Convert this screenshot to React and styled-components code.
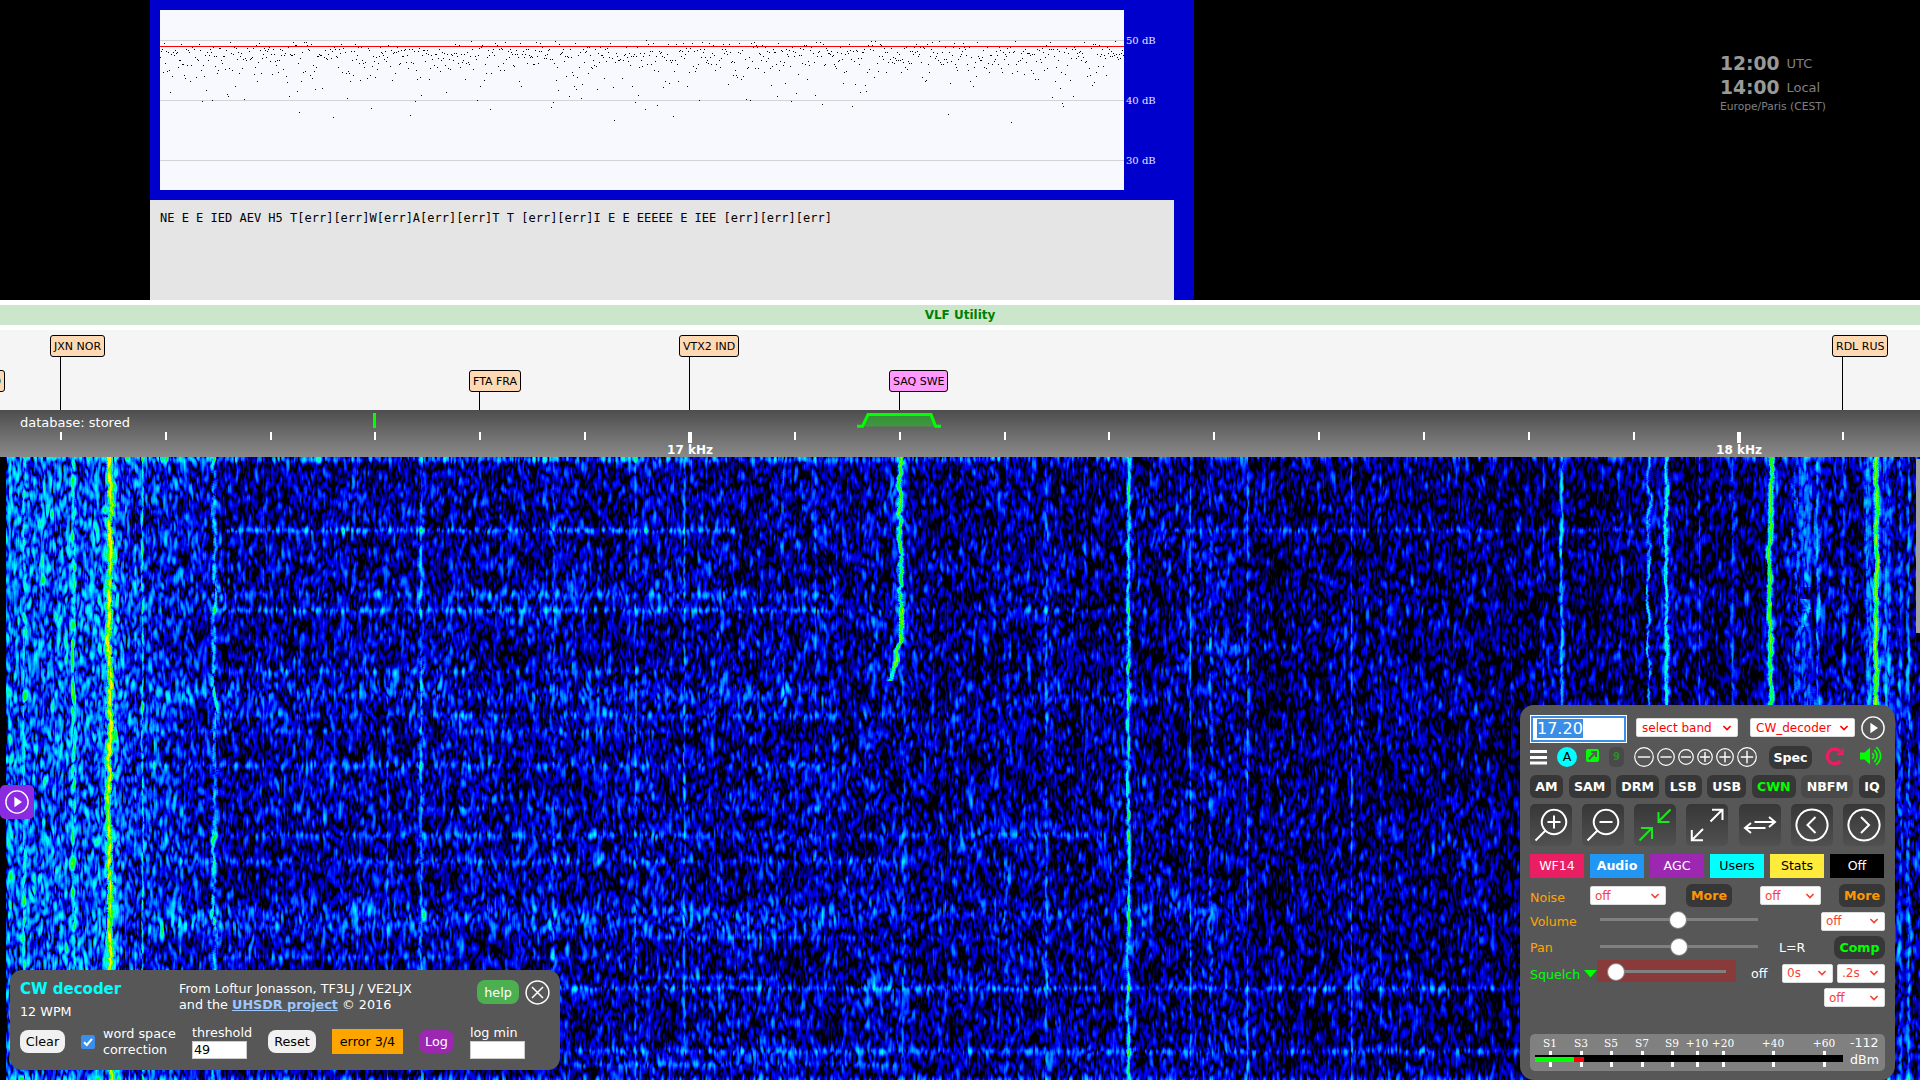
import React, { useEffect, useRef } from "react";
import styled, { createGlobalStyle } from "styled-components";

const WF_W = 1920;
const WF_H = 623;

const stations = [
  { name: "JXN NOR", x: 50 },
  { name: "FTA FRA", x: 469, low: true },
  { name: "VTX2 IND", x: 679 },
  { name: "SAQ SWE", x: 889, low: true, active: true },
  { name: "RDL RUS", x: 1832 },
];

const ticks = Array.from({ length: 18 }, (_, i) => ({
  x: Math.round(60.9 + i * 104.855),
  label: i === 6 ? "17 kHz" : i === 16 ? "18 kHz" : "",
}));

// x, strength, width, drift, first row, last row
const carriers = [
  [9, 14, 1, 0, 0, 623],
  [24, 24, 1.8, 1, 0, 623],
  [73, 24, 1.8, 1, 0, 623],
  [109, 64, 3, 2, 0, 623],
  [142, 34, 1, 0.7, 0, 623],
  [214, 36, 2.2, 2, 0, 623],
  [387, 24, 1.1, 0.5, 230, 623],
  [421, 29, 2.2, 1.5, 0, 623],
  [553, 18, 2, 1.5, 0, 623],
  [635, 25, 1.2, 0.5, 0, 623],
  [684, 24, 1.4, 0.5, 0, 623],
  [748, 18, 1.5, 1, 380, 510],
  [783, 18, 2, 1.5, 0, 250],
  [815, 20, 1.1, 0.3, 0, 400],
  [900, 68, 2.8, 2, 0, 224],
  [903, 18, 1.8, 1, 224, 623],
  [933, 14, 1, 0.4, 0, 623],
  [1007, 14, 2, 2, 0, 623],
  [1046, 24, 1.6, 0.7, 0, 623],
  [1128, 52, 2.1, 1, 0, 623],
  [1190, 28, 1.1, 0.4, 0, 623],
  [1210, 19, 1.6, 1.5, 0, 623],
  [1247, 30, 1.2, 0.6, 0, 623],
  [1351, 28, 1.2, 0.5, 0, 623],
  [1380, 19, 1.4, 0.5, 0, 623],
  [1543, 20, 1.3, 0.5, 0, 623],
  [1561, 51, 2.1, 0.7, 0, 623],
  [1620, 22, 1.7, 1.5, 0, 623],
  [1648, 48, 1.8, 1.8, 0, 623],
  [1666, 62, 2.4, 1.3, 0, 623],
  [1699, 28, 1.1, 0.5, 0, 623],
  [1732, 26, 2.4, 1.5, 0, 623],
  [1770, 79, 3.1, 1.4, 0, 623],
  [1795, 22, 2, 3, 0, 623],
  [1805, 30, 6, 2, 0, 130],
  [1804, 44, 4, 3, 142, 170],
  [1817, 30, 2, 1.5, 0, 623],
  [1805, 26, 8, 4, 170, 623],
  [1843, 20, 1.6, 1, 0, 623],
  [1869, 34, 4, 2, 0, 623],
  [1876, 82, 2.8, 1.3, 0, 623],
  [1886, 30, 5, 2, 0, 623],
  [1900, 24, 2, 1, 0, 623],
  [1908, 28, 2, 1, 0, 623],
];
const SAQ = carriers.findIndex((c) => c[0] === 900);

// row, strength, thickness, from, to
const bursts = [
  [3, 15, 3, 150, 1000],
  [73, 27, 3.5, 225, 735],
  [73, 14, 3, 1150, 1640],
  [137, 16, 5, 210, 840],
  [153, 22, 3.5, 200, 830],
  [153, 9, 3, 830, 1150],
  [189, 6, 3, 1200, 1780],
  [214, 14, 4, 220, 680],
  [236, 14, 10, 150, 840],
  [242, 12, 6, 1030, 1170],
  [258, 14, 4, 220, 900],
  [274, 11, 3, 150, 700],
  [308, 14, 4, 150, 860],
  [351, 8, 3, 400, 900],
  [378, 16, 4, 200, 1130],
  [404, 16, 4, 180, 910],
  [455, 12, 10, 150, 1240],
  [470, 12, 9, 150, 850],
  [480, 12, 3, 640, 1000],
  [500, 11, 3, 220, 640],
  [520, 15, 3, 640, 780],
  [531, 22, 3.5, 150, 1530],
  [594, 20, 4, 560, 1520],
  [607, 18, 3.5, 560, 900],
];

function makeRandom(seed) {
  let s = seed;
  return () => {
    s = (s + 0x6d2b79f5) | 0;
    let t = Math.imul(s ^ (s >>> 15), 1 | s);
    t = (t + Math.imul(t ^ (t >>> 7), 61 | t)) ^ t;
    return ((t ^ (t >>> 14)) >>> 0) / 4294967296;
  };
}

function blur(src, dx, dy, r) {
  const out = new Float32Array(src.length);
  for (let y = 0; y < WF_H; y++) {
    for (let x = 0; x < WF_W; x++) {
      let sum = 0;
      for (let k = -r; k <= r; k++) {
        const xx = Math.min(WF_W - 1, Math.max(0, x + k * dx));
        const yy = Math.min(WF_H - 1, Math.max(0, y + k * dy));
        sum += src[yy * WF_W + xx];
      }
      out[y * WF_W + x] = sum;
    }
  }
  return out;
}

function noiseField(rand) {
  let f = new Float32Array(WF_W * WF_H);
  for (let i = 0; i < f.length; i++) f[i] = rand() + rand() + rand() - 1.5;
  f = blur(f, 1, 0, 1);
  f = blur(f, 1, 0, 1);
  f = blur(f, 0, 1, 3);
  f = blur(f, 0, 1, 4);
  return f;
}

function wfColor(i) {
  if (i < 0) return [0, 0, 0];
  if (i < 32) return [0, 0, (i * 255) / 32];
  if (i < 72) return [0, ((i - 32) * 255) / 40, 255];
  if (i < 86) return [0, 255, 255 - ((i - 72) * 255) / 14];
  if (i < 112) return [((i - 86) * 255) / 26, 255, 0];
  return [255, Math.max(0, 255 - (i - 112) * 4), 0];
}

function floorLevel(x) {
  if (x < 6) return -90;
  if (x < 100) return 49;
  if (x < 230) return 49 - (x - 100) * 0.19;
  if (x < 900) return 24.5 - (x - 230) * 0.002;
  if (x < 1250) return 22;
  if (x < 1500) return 19;
  if (x < 1780) return 16;
  return 22;
}

function drawWaterfall(canvas) {
  const ctx = canvas.getContext("2d");
  const rand = makeRandom(1720);
  const re = noiseField(rand);
  const im = noiseField(rand);
  let mean = 0;
  for (let i = 0; i < re.length; i++) mean += re[i] * re[i] + im[i] * im[i];
  mean /= re.length;

  const columns = Array.from({ length: WF_W }, () => (rand() - 0.5) * 8);
  const level = new Float32Array(WF_W * WF_H);
  for (let y = 0; y < WF_H; y++) {
    for (let x = 0; x < WF_W; x++) {
      const swell = 3 * Math.sin(x / 37 + y / 61) * Math.sin(y / 29 - x / 83);
      level[y * WF_W + x] = floorLevel(x) + columns[x] + swell;
    }
  }
  bursts.forEach(([row, amp, thick, from, to]) => {
    const first = Math.max(0, Math.floor(row - thick * 2));
    for (let y = first; y < Math.min(WF_H, row + thick * 2); y++) {
      const a = amp * Math.exp(-((y - row) ** 2) / (thick * thick));
      for (let x = from; x < to; x++) level[y * WF_W + x] += a;
    }
  });
  // carriers do not flicker as much as the noise under them
  const steady = new Float32Array(WF_W * WF_H);
  carriers.forEach(([cx, amp, width, drift, from, to], n) => {
    let jitter = 0;
    for (let y = from; y < to; y++) {
      jitter = jitter * 0.85 + (rand() - 0.5) * drift * 0.7;
      let c = cx + jitter + drift * (Math.sin(y / 9 + n) * 0.4 + Math.sin(y / 31 + n * 2) * 0.4);
      if (n === SAQ && y > 170) c -= ((y - 170) / 54) ** 1.5 * 11;
      for (let x = Math.floor(c - 12); x < c + 13; x++) {
        if (x < 0 || x >= WF_W) continue;
        const d = (x - c) ** 2;
        const halo = amp > 55 ? 18 * Math.exp(-d / 50) : 0;
        const a = Math.max(amp * Math.exp(-d / (width * width)), halo);
        steady[y * WF_W + x] = Math.max(steady[y * WF_W + x], a);
      }
    }
  });

  const img = ctx.createImageData(WF_W, WF_H);
  for (let i = 0; i < level.length; i++) {
    const db = 10 * Math.log10((re[i] * re[i] + im[i] * im[i]) / mean + 0.01);
    const k = 3.7 * Math.exp(-steady[i] / 62);
    const [r, g, b] = wfColor(level[i] + db * k + steady[i]);
    img.data[i * 4] = r;
    img.data[i * 4 + 1] = g;
    img.data[i * 4 + 2] = b;
    img.data[i * 4 + 3] = 255;
  }
  ctx.putImageData(img, 0, 0);
}

function signalDots() {
  const rand = makeRandom(49);
  let d = "";
  for (let x = 0; x < 964; x++) {
    const y = 30 + rand() * 12 - Math.log(1 - rand()) * 13.5;
    d += `M${x} ${Math.min(112, Math.round(y))}h1v1h-1z`;
  }
  return d;
}
const dots = signalDots();

function Select({ width, children, bright }) {
  return (
    <SelectBox $width={width} $bright={bright}>
      {children}
      <svg width="10" height="6" viewBox="0 0 10 6">
        <path d="M1.4 1 L5 4.6 L8.6 1" fill="none" stroke="currentColor" strokeWidth="1.6" />
      </svg>
    </SelectBox>
  );
}

function PlayCircle({ size }) {
  return (
    <svg width={size} height={size} viewBox="0 0 24 24">
      <circle cx="12" cy="12" r="11.1" fill="none" stroke="#fff" strokeWidth="1.4" />
      <path d="M9.4 6.8 L17 12 L9.4 17.2z" fill="#fff" />
    </svg>
  );
}

function RoundSign({ size, plus }) {
  const c = size / 2;
  const arm = size * 0.31;
  return (
    <svg width={size} height={size}>
      <circle cx={c} cy={c} r={c - 0.7} fill="none" stroke="#fff" strokeWidth="1.2" />
      <path
        d={`M${c - arm} ${c}H${c + arm}` + (plus ? `M${c} ${c - arm}V${c + arm}` : "")}
        stroke="#fff"
        strokeWidth="1.4"
      />
    </svg>
  );
}

const toolPaths = {
  zoomIn: "M24 5.8a12.2 12.2 0 1 0 .01 0M15 27L5.5 36.5M24 11.5v13M17.5 18h13",
  zoomOut: "M24 5.8a12.2 12.2 0 1 0 .01 0M15 27L5.5 36.5M17.5 18h13",
  shrink: "M36.5 5.5L25 17M24.5 8v10h11M5.5 36.5L17.5 24.5M7 24h11v11",
  grow: "M24.5 17.5L36 6M26 5.8h10.5V16M5.5 36.5L17 25M5.8 26v10.3H17",
  swap: "M15.5 18H36M30 13l6 5-6 5M26.5 24H6M12 19l-6 5 6 5",
  left: "M21 5.5a15.5 15.5 0 1 0 .01 0M24.5 13l-8 8 8 8",
  right: "M21 5.5a15.5 15.5 0 1 0 .01 0M18 13l8 8-8 8",
};

const modes = [
  ["AM", 33],
  ["SAM", 42],
  ["DRM", 43],
  ["LSB", 37],
  ["USB", 39],
  ["CWN", 44],
  ["NBFM", 52],
  ["IQ", 26],
];

const tabs = [
  ["WF14", "#e91e63", "#fff"],
  ["Audio", "#2196f3", "#fff"],
  ["AGC", "#9c27b0", "#fff"],
  ["Users", "#00ffff", "#000"],
  ["Stats", "#ffeb3b", "#000"],
  ["Off", "#000", "#fff"],
];

const meterMarks = [
  ["S1", 20],
  ["S3", 51],
  ["S5", 81],
  ["S7", 112],
  ["S9", 142],
  ["+10", 167],
  ["+20", 193],
  ["+40", 243],
  ["+60", 294],
];

function Waterfall() {
  const ref = useRef(null);
  useEffect(() => {
    drawWaterfall(ref.current);
  }, []);
  return <WaterfallCanvas ref={ref} width={WF_W} height={WF_H} />;
}

function TopArea() {
  return (
    <Top>
      <Decoder>
        <ChartRow>
          <svg width="964" height="180" shapeRendering="crispEdges">
            <rect width="964" height="180" fill="#f8f9ff" />
            <path d="M0 30.5H964M0 90.5H964M0 150.5H964" stroke="#d3d3d3" />
            <path d={dots} fill="#000" />
            <path d="M0 36.5H964" stroke="#f00" />
          </svg>
          <DbLabels>
            <span>50 dB</span>
            <span>40 dB</span>
            <span>30 dB</span>
          </DbLabels>
        </ChartRow>
        <Output>
          NE E E IED AEV H5 T[err][err]W[err]A[err][err]T T [err][err]I E E EEEEE E IEE
          [err][err][err]
        </Output>
      </Decoder>
      <Clock>
        <div>
          <b>12:00</b> <span>UTC</span>
        </div>
        <div>
          <b>14:00</b> <span>Local</span>
        </div>
        <small>Europe/Paris (CEST)</small>
      </Clock>
    </Top>
  );
}

function FrequencyScale() {
  return (
    <Scale>
      <Database>database: stored</Database>
      <Passband width="90" height="18" viewBox="855 411 90 18">
        <path d="M863 426.5L868 414.5H931L936 426.5z" fill="#00ff00" fillOpacity="0.35" />
        <path
          d="M857 426.3h5.5L868 414.6H931L935.6 426.3H941"
          fill="none"
          stroke="#0f0"
          strokeWidth="3"
        />
      </Passband>
      <CarrierMark />
      {ticks.map((t) => (
        <Tick key={t.x} $big={t.label} style={{ left: t.x }}>
          {t.label && <b>{t.label}</b>}
        </Tick>
      ))}
    </Scale>
  );
}

function DecoderPanel() {
  return (
    <CwPanel>
      <CwHead>
        <CwTitle>
          <b>CW decoder</b>
          <span>12 WPM</span>
        </CwTitle>
        <Credits>
          From Loftur Jonasson, TF3LJ / VE2LJX
          <br />
          and the <a>UHSDR project</a> © 2016
        </Credits>
        <Pill $width={42} $height={24} $bg="#4caf50" $color="#fff">
          help
        </Pill>
        <svg width="25" height="25" viewBox="0 0 25 25">
          <circle cx="12.5" cy="12.5" r="11.4" fill="none" stroke="#fff" strokeWidth="1.5" />
          <path d="M7 7L18 18M18 7L7 18" stroke="#fff" strokeWidth="1.5" />
        </svg>
      </CwHead>
      <CwControls>
        <Pill $width={45}>Clear</Pill>
        <Check>
          <svg width="14" height="14" viewBox="0 0 14 14">
            <rect width="14" height="14" rx="2" fill="#3b8eea" />
            <path d="M3 7.2L5.8 10L11 3.8" fill="none" stroke="#fff" strokeWidth="2" />
          </svg>
          <span>
            word space
            <br />
            correction
          </span>
        </Check>
        <Field>
          threshold
          <div>49</div>
        </Field>
        <Pill $width={48}>Reset</Pill>
        <ErrorBox>error 3/4</ErrorBox>
        <Pill $width={35} $bg="#9c27b0" $color="#fff">
          Log
        </Pill>
        <Field>
          log min
          <div />
        </Field>
      </CwControls>
    </CwPanel>
  );
}

function ControlPanel() {
  return (
    <Control>
      <Row $h={28}>
        <FreqInput>
          <span>17.20</span>
        </FreqInput>
        <Spacer $w={9} />
        <Select width={102} bright>
          select band
        </Select>
        <Spacer $w={12} />
        <Select width={105} bright>
          CW_decoder
        </Select>
        <Spacer />
        <Raised>
          <PlayCircle size={24} />
        </Raised>
      </Row>
      <Row $h={28}>
        <svg width="17" height="15">
          <path d="M0 1.5h17M0 7.5h17M0 13h17" stroke="#fff" strokeWidth="2.8" />
        </svg>
        <Spacer $w={10} />
        <RoundA>A</RoundA>
        <Spacer $w={9} />
        <Raised>
          <svg width="13" height="13" viewBox="0 0 13 13">
            <rect width="13" height="13" rx="2" fill="#0f0" />
            <path d="M2.8 10.2L9 4M5 3h5v5" fill="none" stroke="#575757" strokeWidth="2" />
          </svg>
        </Raised>
        <Spacer $w={10} />
        <Nine>9</Nine>
        <Spacer $w={10} />
        <Signs>
          <RoundSign size={20} />
          <RoundSign size={18} />
          <RoundSign size={16} />
          <RoundSign size={16} plus />
          <RoundSign size={18} plus />
          <RoundSign size={20} plus />
        </Signs>
        <Spacer $w={12} />
        <DarkButton $width={43} $radius={8}>
          Spec
        </DarkButton>
        <Spacer $w={13} />
        <Raised>
          <svg width="19" height="20" viewBox="0 0 19 20">
            <path
              d="M15.4 15.2a7.4 7.4 0 1 1 -0.6 -10.2"
              fill="none"
              stroke="#e91e63"
              strokeWidth="3.4"
            />
            <path d="M18.7 1.4v7.8h-7.8z" fill="#e91e63" />
          </svg>
        </Raised>
        <Spacer $w={16} />
        <Raised>
          <svg width="23" height="20" viewBox="0 0 23 20">
            <path d="M0 6.5h4.5L10 1.5v17L4.5 13.5H0z" fill="#0f0" />
            <path
              d="M12.3 7q2.6 3 0 6M14.3 3.9q5.6 6.1 0 12.2M16.2 1q8.8 9 0 18"
              fill="none"
              stroke="#0f0"
              strokeWidth="1.7"
            />
          </svg>
        </Raised>
      </Row>
      <Row $h={31} $between>
        {modes.map(([name, width]) => (
          <DarkButton
            key={name}
            $width={width}
            $color={name === "CWN" && "#0f0"}
            $bg={name === "NBFM" && "#494949"}
          >
            {name}
          </DarkButton>
        ))}
      </Row>
      <Row $h={46} $between>
        {Object.keys(toolPaths).map((name) => (
          <Tool key={name}>
            <svg width="42" height="42">
              <path
                d={toolPaths[name]}
                fill="none"
                stroke={name === "shrink" ? "#1de61d" : "#fff"}
                strokeWidth="2"
              />
            </svg>
          </Tool>
        ))}
      </Row>
      <Row $h={36} $gap={6}>
        {tabs.map(([name, bg, color]) => (
          <Tab key={name} $bg={bg} $color={color} $active={name === "Audio"}>
            {name}
          </Tab>
        ))}
      </Row>
      <Row $h={23}>
        <Label $drop={4}>Noise</Label>
        <Select width={76}>off</Select>
        <Spacer $w={20} />
        <DarkButton $width={46} $color="#ff9800">
          More
        </DarkButton>
        <Spacer />
        <Select width={61}>off</Select>
        <Spacer $w={18} />
        <DarkButton $width={46} $color="#ff9800">
          More
        </DarkButton>
      </Row>
      <Row $h={28}>
        <Label>Volume</Label>
        <Slider $width={158} $left={10} $pos={78}>
          <i />
        </Slider>
        <Spacer />
        <Select width={64}>off</Select>
      </Row>
      <Row $h={25}>
        <Label>Pan</Label>
        <Slider $width={158} $left={10} $pos={79}>
          <i />
        </Slider>
        <Value $left={21}>L=R</Value>
        <Spacer />
        <DarkButton $width={51} $color="#0f0" $radius={8}>
          Comp
        </DarkButton>
      </Row>
      <Row $h={26}>
        <Label $on $drop={2}>
          Squelch
          <svg width="13" height="8">
            <path d="M0 0h13L6.5 7.5z" fill="#0f0" />
          </svg>
        </Label>
        <SquelchBox>
          <Slider $width={118} $left={11} $pos={8}>
            <i />
          </Slider>
        </SquelchBox>
        <Value $left={15}>off</Value>
        <Spacer />
        <Select width={51}>0s</Select>
        <Spacer $w={4} />
        <Select width={48}>.2s</Select>
      </Row>
      <Row $h={23}>
        <Spacer />
        <Select width={61}>off</Select>
      </Row>
      <Meter>
        <MeterScale>
          <MeterBar>
            <span />
          </MeterBar>
          {meterMarks.map(([name, x]) => (
            <MeterMark key={name} style={{ left: x }}>
              {name}
            </MeterMark>
          ))}
        </MeterScale>
        <MeterValue>
          <span>-112</span>
          <span>dBm</span>
        </MeterValue>
      </Meter>
    </Control>
  );
}

export default function App() {
  return (
    <Page>
      <GlobalStyle />
      <TopArea />
      <Band>VLF Utility</Band>
      <StationArea>
        <Station $low $cut>
          D
        </Station>
        {stations.map((s) => (
          <Station key={s.name} $low={s.low} $active={s.active} style={{ left: s.x }}>
            {s.name}
          </Station>
        ))}
      </StationArea>
      <FrequencyScale />
      <WaterfallArea>
        <Waterfall />
        <ScrollThumb />
        <SideTab>
          <PlayCircle size={24} />
        </SideTab>
        <DecoderPanel />
        <ControlPanel />
      </WaterfallArea>
    </Page>
  );
}

const GlobalStyle = createGlobalStyle`
  * {
    box-sizing: border-box;
  }
  body {
    margin: 0;
    background: #fff;
    overflow: hidden;
  }
  svg {
    display: block;
    flex-shrink: 0;
  }
`;

const Page = styled.div`
  width: 1920px;
  height: 1080px;
  overflow: hidden;
  display: flex;
  flex-direction: column;
  font-family: "DejaVu Sans", Verdana, sans-serif;
  font-size: 12.75px;
  color: #fff;
`;

const Top = styled.div`
  height: 300px;
  background: #000;
  display: flex;
  justify-content: space-between;
  padding: 0 94px 0 150px;
`;
const Decoder = styled.div`
  width: 1044px;
  background: #0000cc;
  padding-top: 10px;
`;
const ChartRow = styled.div`
  display: flex;
  height: 190px;
  padding-left: 10px;
`;
const DbLabels = styled.div`
  display: flex;
  flex-direction: column;
  padding: 1px 0 0 2px;
  font-family: "DejaVu Serif", serif;
  font-size: 10px;
  color: #e8e8ff;
  span {
    height: 60px;
    line-height: 60px;
  }
`;
const Output = styled.div`
  width: 1024px;
  height: 100px;
  background: #e5e5e5;
  padding: 10px;
  color: #000;
  font: 12px/16px "DejaVu Sans Mono", monospace;
`;
const Clock = styled.div`
  width: 106px;
  padding-top: 51px;
  color: #999;
  white-space: nowrap;
  div {
    display: flex;
    align-items: center;
    gap: 7px;
    height: 24px;
  }
  b {
    font-size: 18.7px;
  }
  span {
    font-size: 13px;
    color: #808080;
  }
  small {
    display: block;
    font-size: 10.7px;
    line-height: 16px;
    color: #808080;
  }
`;

const Band = styled.div`
  height: 30px;
  border: solid #fff;
  border-width: 5px 0;
  background: #cce6cc;
  color: green;
  font-size: 12px;
  font-weight: bold;
  line-height: 20px;
  text-align: center;
`;
const StationArea = styled.div`
  position: relative;
  height: 80px;
  background: #f5f5f5;
`;
const Station = styled.div`
  position: absolute;
  top: ${(props) => (props.$low ? 40 : 5)}px;
  ${(props) => props.$cut && "right: 1915px;"}
  height: 22px;
  padding: 0 3px;
  border: 1px solid #000;
  border-radius: 3px;
  background: ${(props) => (props.$active ? "#ff99ff" : "#ffd9b3")};
  color: #000;
  font-size: 11px;
  line-height: 21px;
  white-space: nowrap;
  &::after {
    content: "";
    position: absolute;
    left: 9px;
    top: 21px;
    width: 1px;
    height: ${(props) => (props.$low ? 18 : 53)}px;
    background: #000;
  }
`;

const Scale = styled.div`
  position: relative;
  height: 47px;
  background: linear-gradient(#4d4d4d, #8a8a8a);
`;
const Database = styled.div`
  padding: 4px 0 0 20px;
  line-height: 17px;
  font-size: 13px;
`;
const Passband = styled.svg`
  position: absolute;
  left: 855px;
  top: 1px;
`;
const CarrierMark = styled.div`
  position: absolute;
  left: 373px;
  top: 3px;
  width: 3px;
  height: 15px;
  background: #0f0;
`;
const Tick = styled.div`
  position: absolute;
  top: 22px;
  width: ${(props) => (props.$big ? 4 : 2)}px;
  height: ${(props) => (props.$big ? 11 : 8)}px;
  margin-left: ${(props) => (props.$big ? -2 : -1)}px;
  background: #fff;
  display: flex;
  justify-content: center;
  b {
    font-size: 12px;
    line-height: 14px;
    white-space: nowrap;
    margin-top: 11px;
  }
`;

const WaterfallArea = styled.div`
  position: relative;
  height: 623px;
  background: #000;
`;
const WaterfallCanvas = styled.canvas`
  display: block;
`;
const ScrollThumb = styled.div`
  position: absolute;
  right: 0;
  top: 2px;
  width: 4px;
  height: 174px;
  background: #a0a0a0;
`;
const SideTab = styled.div`
  position: absolute;
  left: 0;
  top: 328px;
  width: 34px;
  height: 34px;
  padding-left: 5px;
  border-radius: 5px;
  background: #8a2be2;
  display: flex;
  align-items: center;
`;

const CwPanel = styled.div`
  position: absolute;
  left: 10px;
  bottom: 10px;
  width: 550px;
  height: 100px;
  padding: 10px;
  border-radius: 12px;
  background: #575757;
`;
const CwHead = styled.div`
  display: flex;
  align-items: flex-start;
  height: 47px;
`;
const CwTitle = styled.div`
  width: 159px;
  b {
    display: block;
    font-size: 15px;
    line-height: 19px;
    color: #00ffff;
  }
  span {
    display: block;
    margin-top: 5px;
    line-height: 16px;
  }
`;
const Credits = styled.div`
  flex: 1;
  line-height: 16px;
  margin-top: 1px;
  a {
    color: #9cc8ff;
    font-weight: bold;
    text-decoration: underline;
  }
  & + div {
    margin-right: 6px;
  }
`;
const Pill = styled.div`
  width: ${(props) => props.$width}px;
  height: ${(props) => props.$height || 23}px;
  border-radius: 8px;
  background: ${(props) => props.$bg || "#f1f1f1"};
  color: ${(props) => props.$color || "#000"};
  display: flex;
  align-items: center;
  justify-content: center;
`;
const CwControls = styled.div`
  display: flex;
  align-items: center;
  gap: 16px;
  height: 29px;
`;
const Check = styled.div`
  display: flex;
  align-items: center;
  gap: 8px;
  width: 95px;
  line-height: 16px;
  white-space: nowrap;
`;
const Field = styled.div`
  width: 60px;
  line-height: 16px;
  white-space: nowrap;
  div {
    width: 55px;
    height: 18px;
    border: 1px solid #ccc;
    background: #fff;
    color: #000;
    padding-left: 1px;
  }
`;
const ErrorBox = styled.div`
  width: 71px;
  height: 25px;
  line-height: 25px;
  background: #ffa500;
  color: #000;
  text-align: center;
`;

const Control = styled.div`
  position: absolute;
  right: 25px;
  bottom: 0;
  width: 375px;
  height: 375px;
  padding: 10px;
  border-radius: 14px;
  background: #575757;
  font-size: 12.6px;
`;
const Row = styled.div`
  display: flex;
  align-items: center;
  height: ${(props) => props.$h}px;
  gap: ${(props) => props.$gap || 0}px;
  justify-content: ${(props) => (props.$between ? "space-between" : "flex-start")};
`;
const Spacer = styled.div`
  ${(props) => (props.$w ? `width: ${props.$w}px;` : "flex: 1;")}
`;
const Raised = styled.div`
  margin-bottom: 3px;
`;
const FreqInput = styled.div`
  width: 97px;
  height: 28px;
  border: 1px solid #fff;
  background: #fff;
  box-shadow: inset 0 0 0 2px #3a8ee6;
  padding: 3px 6px;
  span {
    display: block;
    width: 46px;
    height: 19px;
    background: #3a8ee6;
    font-size: 16px;
    line-height: 19px;
  }
`;
const SelectBox = styled.div`
  width: ${(props) => props.$width}px;
  height: 19px;
  margin-bottom: ${(props) => (props.$bright ? 3 : 0)}px;
  padding: 0 5px 0 ${(props) => (props.$bright ? 5 : 4)}px;
  border: 1px solid #ddd;
  border-radius: 2px;
  background: #fff;
  color: ${(props) => (props.$bright ? "#f00" : "#f44336")};
  font-size: 12px;
  display: flex;
  align-items: center;
  justify-content: space-between;
  white-space: nowrap;
`;
const RoundA = styled.div`
  width: 20px;
  height: 20px;
  border-radius: 50%;
  background: #00ffff;
  color: #000;
  text-align: center;
  line-height: 20px;
`;
const Nine = styled.div`
  width: 15px;
  height: 20px;
  border-radius: 5px;
  background: #494949;
  color: #2e8b2e;
  font-size: 10px;
  font-weight: bold;
  line-height: 20px;
  text-align: center;
`;
const Signs = styled.div`
  display: flex;
  align-items: center;
  gap: 3px;
`;
const DarkButton = styled.div`
  width: ${(props) => props.$width}px;
  height: 23px;
  border-radius: ${(props) => props.$radius || 6}px;
  background: ${(props) => props.$bg || "#373737"};
  color: ${(props) => props.$color || "#fff"};
  font-weight: bold;
  display: flex;
  align-items: center;
  justify-content: center;
`;
const Tool = styled.div`
  width: 42px;
  height: 42px;
  border-radius: 5px;
  background: linear-gradient(#373737, #505050);
`;
const Tab = styled.div`
  width: 54px;
  height: 24px;
  background: ${(props) => props.$bg};
  color: ${(props) => props.$color};
  font-weight: ${(props) => (props.$active ? "bold" : "normal")};
  line-height: 24px;
  text-align: center;
`;
const Label = styled.div`
  width: ${(props) => (props.$on ? 67 : 60)}px;
  padding-top: ${(props) => props.$drop || 0}px;
  color: ${(props) => (props.$on ? "#00ff00" : "#ffa500")};
  display: flex;
  align-items: center;
  justify-content: space-between;
`;
const Slider = styled.div`
  position: relative;
  width: ${(props) => props.$width}px;
  height: 3px;
  margin: 0 0 3px ${(props) => props.$left}px;
  background: #808080;
  i {
    position: absolute;
    left: ${(props) => props.$pos - 9}px;
    top: -7px;
    width: 18px;
    height: 18px;
    border-radius: 50%;
    border: 1px solid #808080;
    background: #fff;
  }
`;
const SquelchBox = styled.div`
  display: flex;
  align-items: center;
  width: 139px;
  height: 22px;
  margin-bottom: 4px;
  padding-top: 3px;
  background: #893b3b;
`;
const Value = styled.div`
  margin-left: ${(props) => props.$left}px;
`;
const Meter = styled.div`
  display: flex;
  width: 355px;
  height: 37px;
  margin-top: 25px;
  border-radius: 5px;
  background: #808080;
`;
const MeterScale = styled.div`
  position: relative;
  width: 320px;
  padding: 21px 0 0 5px;
`;
const MeterBar = styled.div`
  width: 308px;
  height: 7px;
  padding-top: 2px;
  background: #000;
  span {
    display: block;
    width: 49px;
    height: 5px;
    background: linear-gradient(90deg, #0f0 39px, #f00 39px);
  }
`;
const MeterMark = styled.div`
  position: absolute;
  top: 3px;
  width: 30px;
  height: 30px;
  margin-left: -15px;
  font-family: "DejaVu Serif", serif;
  font-size: 10.6px;
  line-height: 13px;
  text-align: center;
  &::before,
  &::after {
    content: "";
    position: absolute;
    left: 14px;
    top: 14px;
    width: 3px;
    height: 4px;
    background: #fff;
  }
  &::after {
    top: 25px;
    height: 5px;
  }
`;
const MeterValue = styled.div`
  display: flex;
  flex-direction: column;
  justify-content: space-between;
  padding: 1px 0 3px;
  line-height: 16px;
`;
